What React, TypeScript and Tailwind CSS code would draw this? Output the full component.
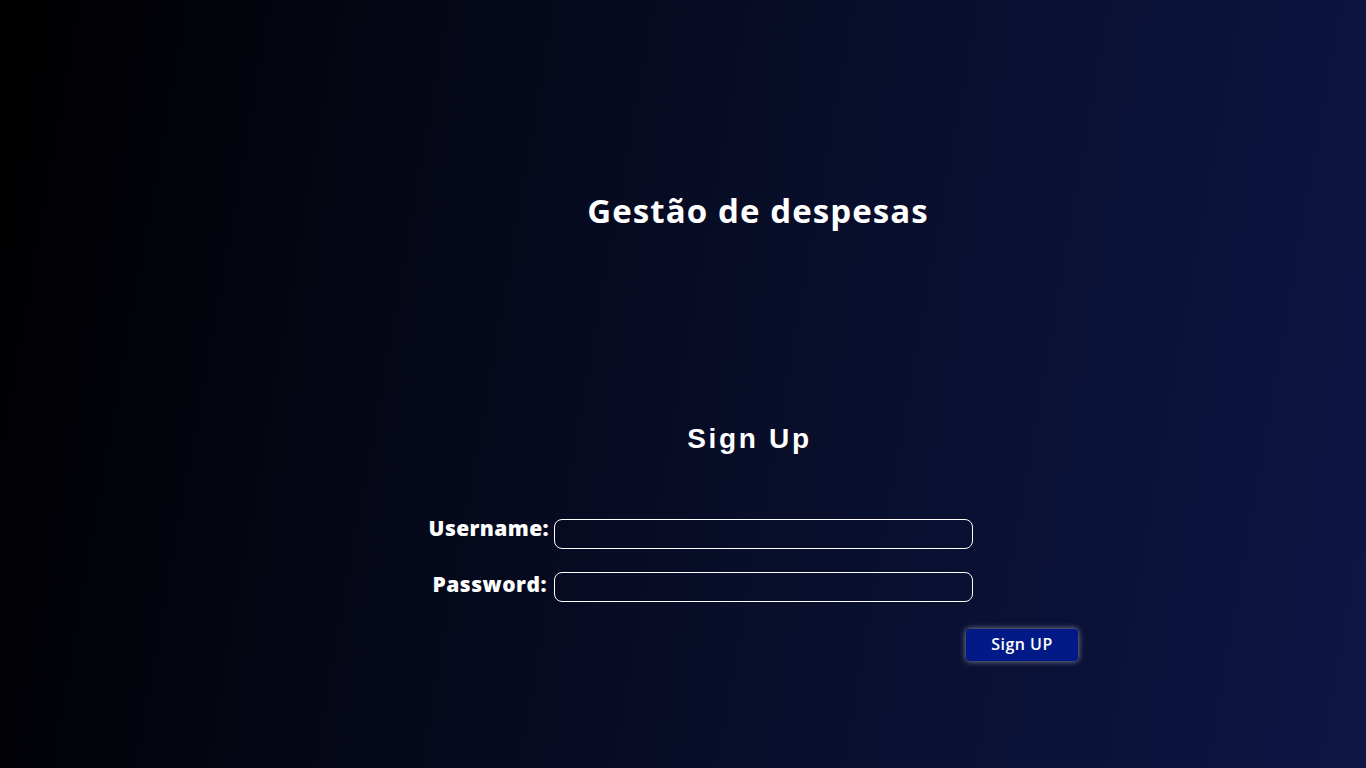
import React from "react";

export default function App() {
  return (
    <div className="w-[1366px] h-[768px] overflow-hidden bg-[linear-gradient(100deg,#000000_0%,#070b22_45%,#0d1645_100%)] text-white">
      <div className="flex flex-col items-center pl-[150px] pt-[189px]">
        <h1 className="font-['Open_Sans',sans-serif] text-[33px] leading-[44px] font-bold tracking-[1.1px]">
          Gestão de despesas
        </h1>
      </div>
      <div className="flex flex-col items-center pl-[133px] pt-[189px]">
        <h2 className="font-['Liberation_Sans',Arial,sans-serif] text-[28px] leading-[34px] font-bold tracking-[2.7px]">
          Sign Up
        </h2>
      </div>
      <div className="pl-[424px] pt-[63px] w-[1078px] flex flex-col">
        <div className="flex items-center gap-[5px] h-[30px]">
          <label className="w-[125px] pl-[3px] text-right font-['Open_Sans',sans-serif] text-[21px] font-extrabold tracking-[0.4px] leading-none -mt-[11px]">
            Username:
          </label>
          <input className="w-[419px] h-[30px] rounded-[8px] border border-white bg-transparent outline-none px-2 text-white" />
        </div>
        <div className="flex items-center gap-[5px] h-[30px] mt-[23px]">
          <label className="w-[125px] pr-[2px] text-right font-['Open_Sans',sans-serif] text-[21px] font-extrabold tracking-[0.5px] leading-none -mt-[6px]">
            Password:
          </label>
          <input type="password" className="w-[419px] h-[30px] rounded-[8px] border border-white bg-transparent outline-none px-2 text-white" />
        </div>
        <div className="flex justify-end mt-[27px]">
          <button className="w-[112px] h-[32px] pb-[3px] rounded-[4px] bg-[#021a88] shadow-[0_0_6px_rgba(255,255,255,0.55)] font-['Open_Sans',sans-serif] text-[16px] font-semibold tracking-[0.5px] text-white">
            Sign UP
          </button>
        </div>
      </div>
    </div>
  );
}
